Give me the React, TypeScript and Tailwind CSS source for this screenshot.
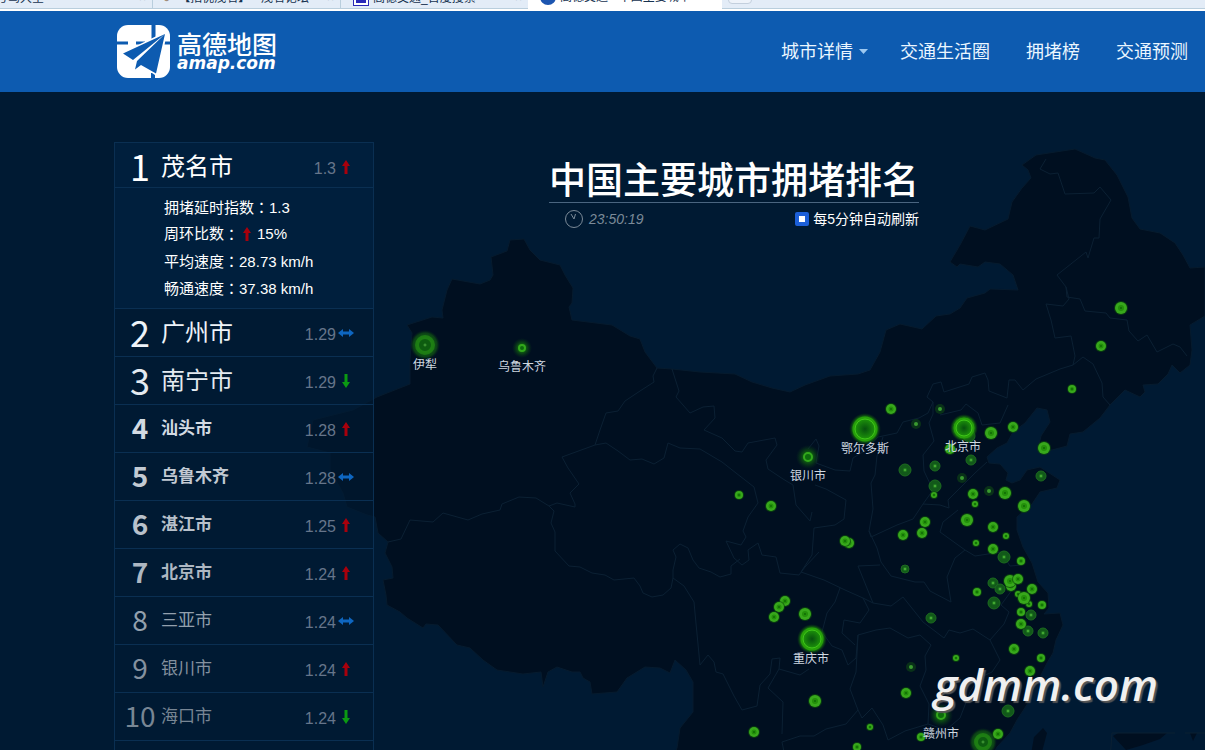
import { useState } from "react";

type Trend = "up" | "down" | "flat";
type DotKind = "solid" | "dim" | "spark" | "halo" | "big" | "haze";

interface City {
  rank: number;
  name: string;
  index: string;
  trend: Trend;
  rankClass: string;
  nameClass: string;
}

const cities: City[] = [
  { rank: 1, name: "茂名市", index: "1.3", trend: "up", rankClass: "text-4xl text-white", nameClass: "text-2xl text-white" },
  { rank: 2, name: "广州市", index: "1.29", trend: "flat", rankClass: "text-4xl text-[#eef3f8]", nameClass: "text-2xl text-[#eef3f8]" },
  { rank: 3, name: "南宁市", index: "1.29", trend: "down", rankClass: "text-4xl text-[#e4eaf0]", nameClass: "text-2xl text-[#e4eaf0]" },
  { rank: 4, name: "汕头市", index: "1.28", trend: "up", rankClass: "text-[28px] font-bold text-[#d3dae2]", nameClass: "text-[17px] font-bold text-[#d3dae2]" },
  { rank: 5, name: "乌鲁木齐", index: "1.28", trend: "flat", rankClass: "text-[28px] font-bold text-[#c2cad3]", nameClass: "text-[17px] font-bold text-[#c2cad3]" },
  { rank: 6, name: "湛江市", index: "1.25", trend: "up", rankClass: "text-[28px] font-bold text-[#b8c1cb]", nameClass: "text-[17px] font-bold text-[#b8c1cb]" },
  { rank: 7, name: "北京市", index: "1.24", trend: "up", rankClass: "text-[28px] font-bold text-[#adb7c2]", nameClass: "text-[17px] font-bold text-[#adb7c2]" },
  { rank: 8, name: "三亚市", index: "1.24", trend: "flat", rankClass: "text-[28px] text-[#93a0ad]", nameClass: "text-[17px] text-[#93a0ad]" },
  { rank: 9, name: "银川市", index: "1.24", trend: "up", rankClass: "text-[28px] text-[#84919f]", nameClass: "text-[17px] text-[#84919f]" },
  { rank: 10, name: "海口市", index: "1.24", trend: "down", rankClass: "text-[28px] text-[#788694]", nameClass: "text-[17px] text-[#788694]" },
];

const LAND =
  "M313 420 353 410 377 397 410 384 410 360 412 333 407 325 432 317 443 318 442 310 447 290 452 279 480 284 490 280 493 275 491 257 507 251 510 240 524 239 530 250 540 260 560 265 565 275 573 288 572 303 569 307 572 320 612 325 630 336 640 339 645 352 657 368 672 369 700 372 735 374 752 382 772 388 790 392 805 385 830 376 858 374 870 370 880 352 886 330 900 324 922 329 936 316 950 314 960 308 967 298 985 293 990 289 1018 290 1013 275 1000 264 985 262 978 267 960 264 957 267 950 262 960 245 970 226 985 230 1008 219 1012 202 1022 188 1031 178 1028 170 1022 165 1036 155 1075 149 1095 158 1105 160 1117 175 1128 197 1132 218 1140 229 1160 233 1175 243 1183 255 1190 268 1205 267 1205 316 1190 325 1192 350 1190 365 1180 373 1172 365 1168 374 1158 384 1143 385 1145 392 1140 397 1125 390 1110 405 1100 418 1083 432 1070 434 1067 446 1052 450 1038 449 1041 436 1050 422 1047 410 1037 408 1025 423 1013 432 1007 443 997 448 987 457 989 463 1000 464 1008 473 1006 480 1012 483 1020 480 1027 470 1040 467 1060 480 1057 488 1040 492 1032 504 1017 517 1017 530 1023 547 1032 563 1038 582 1048 593 1049 608 1044 614 1060 613 1063 625 1056 640 1053 653 1047 663 1040 677 1030 700 1017 720 1010 733 997 747 990 760 672 760 677 748 680 728 693 712 693 682 686 670 675 660 670 673 660 668 645 667 627 678 617 692 592 694 590 682 583 678 580 672 572 672 557 667 548 672 543 687 541 672 523 674 497 670 483 660 470 648 457 645 438 625 426 624 423 628 407 618 400 612 387 605 386 595 383 580 393 578 392 567 385 553 388 542 378 533 375 517 367 515 347 507 343 493 330 470 330 453 307 447Z";

const ISLANDS =
  "M1030 760 1034 737 1043 728 1047 733 1043 748 1040 760Z M1113 736 1118 733 1167 733 1160 739 1143 745 1126 750Z M1190 733 1197 733 1193 741Z";

const borders = [
  // Xinjiang, Qinghai and Tibet
  "M657 368 653 376 654 382 640 391 625 401 618 411 606 413 600 430 595 445 562 457 568 468 579 484 570 493 575 504 575 507 557 503 549 506 536 498 519 497 502 504 500 510 482 514 468 520 443 513 433 522 410 520 401 539 388 542",
  "M549 506 554 511 551 523 555 532 555 551 569 566 580 567 592 573 605 575 614 580 634 578 640 586 643 593 652 597 663 595 671 588 673 578 673 570 676 557 673 550 680 544 688 548 693 560 699 568 711 572 720 577 731 574 731 566 740 559",
  "M595 445 606 443 618 451 630 460 642 459 654 464 664 458 668 443 680 448 700 449 722 462 736 473 754 487 758 503 748 517 743 531 746 537 741 545 726 541 734 558 742 565 749 560 748 550 758 543 762 555 776 557 780 573 799 575 805 567 819 552",
  "M673 578 684 586 694 602 695 613 700 665 708 655 714 662 716 672 723 674 734 696 742 710 757 706 760 685 770 674 772 659 780 658 779 669 800 675 809 669",
  // Gansu and Inner Mongolia
  "M672 369 679 391 676 397 690 413 703 407 714 406 715 418 704 430 722 438 735 451 742 452 748 443 775 438 777 445 766 460 768 469 783 479 793 485 796 505 810 521 812 512",
  "M808 449 816 439 819 446 816 463 835 470 850 471 853 458 866 450 878 437 897 433 903 422 919 418 928 413 933 402 927 397 933 384 941 382 944 392 969 384 972 377 985 373 988 380 989 391 1007 398 1009 380 1015 380 1023 390 1036 379 1060 369 1073 365 1075 356 1071 336 1055 338 1051 320 1046 304 1063 306 1069 299 1066 287 1057 275 1086 252 1088 258 1094 238 1099 238 1100 219 1111 200 1100 187 1094 193 1065 194 1058 173 1050 174 1040 169 1046 159",
  "M1066 287 1067 297 1080 299 1085 311 1106 313 1110 318 1127 320 1129 331 1138 341 1147 335 1157 352 1173 344 1180 347 1187 356",
  "M1073 365 1083 357 1093 364 1102 383 1103 397 1110 405",
  // Hebei, Shanxi and Shandong
  "M933 402 933 414 929 423 934 441 923 455 924 471 933 490 923 504 940 505 949 508 948 500 975 473 987 462",
  "M940 415 961 410 966 404 978 413 982 425 1000 423 1008 405",
  "M883 437 877 456 875 475 871 483 873 509 869 531 871 537 897 525 913 519 923 504",
  "M869 531 877 548 881 562 891 576 915 582 924 582 930 591 951 602 947 577 955 558 965 550 940 532 943 522 958 510",
  "M965 550 975 556 1001 552 1010 566 1022 565",
  // Shaanxi, Sichuan and Hubei
  "M815 485 826 489 846 500 844 519 835 525 814 528 812 555 801 572 824 580 845 590 863 598 873 603 858 566 880 565",
  "M840 588 835 602 827 613 822 632 832 646 842 650 848 665 856 658 858 635 876 630 890 628 908 638 920 635 931 645 925 656 926 670 920 686 929 704 928 724",
  "M863 598 869 610 860 623 844 620 842 633 855 645",
  "M873 603 891 606 903 597 923 622 944 638 949 630 960 633 973 629 990 640 1004 624 1009 612 1001 605 1012 590",
  "M858 635 856 672 850 689 858 710 846 724 826 729 814 736 800 736 782 742 785 757",
  "M779 669 768 688 783 702 782 734",
  "M928 724 905 731 888 740 883 725 872 708 862 718 858 710",
  "M990 640 1000 660 992 672 979 678 970 692 960 718 946 730 928 724",
  "M1175 733 1112 733 1110 760 M1185 733 1205 733",
];

const dots: [number, number, number, DotKind][] = [
  [1121, 308, 6, "solid"], [1101, 346, 5, "solid"], [1072, 389, 4, "solid"],
  [891, 409, 5, "solid"], [940, 409, 3, "spark"], [916, 424, 3, "spark"],
  [991, 433, 6, "solid"], [1013, 427, 5, "solid"], [1044, 448, 6, "solid"],
  [950, 449, 5, "solid"], [969, 436, 6, "dim"], [964, 428, 11, "big"],
  [865, 429, 13, "big"], [812, 639, 12, "big"], [425, 345, 13, "haze"],
  [522, 348, 5, "halo"], [808, 457, 6, "halo"], [941, 715, 6, "halo"],
  [905, 470, 6, "dim"], [935, 466, 5, "dim"], [935, 486, 6, "dim"], [934, 495, 3, "solid"],
  [971, 460, 5, "dim"], [962, 478, 3, "spark"], [1041, 476, 5, "dim"],
  [973, 494, 5, "solid"], [989, 491, 3, "spark"], [975, 504, 3, "solid"],
  [1005, 493, 6, "solid"], [1024, 506, 6, "solid"], [967, 520, 6, "solid"],
  [993, 527, 5, "solid"], [1006, 536, 3, "solid"], [976, 543, 3, "solid"],
  [993, 549, 5, "solid"], [1004, 557, 6, "dim"], [1021, 561, 4, "solid"],
  [739, 495, 4, "solid"], [771, 506, 5, "solid"], [925, 522, 5, "solid"],
  [903, 535, 5, "solid"], [922, 533, 5, "solid"], [849, 543, 5, "solid"], [845, 541, 5, "solid"],
  [905, 569, 4, "dim"], [785, 601, 5, "solid"], [779, 607, 5, "solid"],
  [774, 617, 5, "solid"], [805, 614, 6, "solid"], [931, 618, 5, "dim"],
  [993, 583, 5, "dim"], [1000, 589, 5, "dim"], [977, 592, 4, "solid"],
  [1011, 586, 5, "solid"], [1010, 581, 6, "solid"], [1018, 579, 5, "solid"],
  [994, 603, 6, "dim"], [1032, 589, 5, "solid"], [1018, 594, 3, "solid"],
  [1029, 604, 3, "solid"], [1024, 598, 6, "solid"], [1042, 605, 4, "solid"],
  [1021, 612, 4, "solid"], [1031, 615, 5, "dim"], [1028, 631, 5, "dim"],
  [1021, 624, 5, "solid"], [1043, 633, 5, "dim"], [1014, 649, 5, "solid"],
  [1041, 658, 4, "solid"], [956, 658, 3, "solid"], [1030, 671, 5, "solid"],
  [911, 667, 3, "spark"], [906, 693, 5, "solid"], [815, 701, 6, "solid"],
  [754, 732, 5, "solid"], [870, 727, 3, "solid"], [857, 747, 4, "solid"],
  [921, 737, 4, "solid"], [1008, 711, 6, "dim"], [983, 742, 12, "haze"], [998, 734, 5, "solid"],
];

const labels: [number, number, string][] = [
  [425, 369, "伊犁"],
  [522, 371, "乌鲁木齐"],
  [865, 453, "鄂尔多斯"],
  [963, 451, "北京市"],
  [808, 480, "银川市"],
  [811, 663, "重庆市"],
  [941, 738, "赣州市"],
];

function TrendIcon({ trend }: { trend: Trend }) {
  if (trend === "flat") {
    return (
      <svg viewBox="0 0 16 8" className="w-4 h-2" role="img" aria-label="持平">
        <path d="M0 4 5 0V2.500H11V0L16 4 11 8V5.500H5V8Z" fill="#0e66c0" />
      </svg>
    );
  }
  return (
    <svg
      viewBox="0 0 8 14"
      className={`w-2 h-3.5 ${trend === "down" ? "rotate-180" : ""}`}
      role="img"
      aria-label={trend === "up" ? "上升" : "下降"}
    >
      <path d="M4 0 8 6H5.500V14H2.500V6H0Z" fill={trend === "up" ? "#a8000c" : "#0b9a12"} />
    </svg>
  );
}

function Dot({ x, y, r, kind }: { x: number; y: number; r: number; kind: DotKind }) {
  switch (kind) {
    case "big":
      return (
        <g>
          <circle cx={x} cy={y} r={r + 3} fill="url(#glow)" />
          <circle cx={x} cy={y} r={r - 2} fill="url(#core)" stroke="#27a00a" strokeWidth="3" />
          <circle cx={x} cy={y} r={r - 3} fill="none" stroke="#3fc41a" />
        </g>
      );
    case "haze":
      return (
        <g>
          <circle cx={x} cy={y} r={r + 2} fill="url(#glow)" opacity="0.6" />
          <circle cx={x} cy={y} r={r - 5} fill="#0b5a10" stroke="#238a14" strokeWidth="4" opacity="0.7" />
          <circle cx={x} cy={y} r="1" fill="none" stroke="#49a23c" />
        </g>
      );
    case "halo":
      return (
        <g>
          <circle cx={x} cy={y} r={r * 2} fill="url(#halo)" />
          <circle cx={x} cy={y} r={r - 2} fill="#0c6a0c" stroke="#33a81c" strokeWidth="2" />
        </g>
      );
    case "dim":
      return (
        <g>
          <circle cx={x} cy={y} r={r} fill="#12591a" stroke="#1d6b20" strokeWidth="1" />
          <circle cx={x} cy={y} r="2" fill="#227d1e" />
          <circle cx={x} cy={y} r="1" fill="#4fb53c" />
        </g>
      );
    case "spark":
      return (
        <g>
          <circle cx={x} cy={y} r={r + 2} fill="#0b3a18" opacity="0.8" />
          <circle cx={x} cy={y} r={r - 1} fill="#3a9a30" />
        </g>
      );
    default:
      return (
        <g>
          <circle cx={x} cy={y} r={r + 1} fill="#0b4d0c" opacity="0.7" />
          <circle cx={x} cy={y} r={r} fill="#38a81c" />
          <circle cx={x} cy={y} r={r / 2} fill="#23900a" />
          <circle cx={x} cy={y} r="1" fill="#0f6a06" />
        </g>
      );
  }
}

function TrafficMap() {
  return (
    <svg
      viewBox="0 92 1205 658"
      width="1205"
      height="658"
      className="absolute left-0 top-0 max-w-none overflow-visible"
      aria-hidden="true"
    >
      <defs>
        <radialGradient id="glow">
          <stop offset="0.5" stopColor="#1f9a0a" />
          <stop offset="0.8" stopColor="#17750c" stopOpacity="0.8" />
          <stop offset="1" stopColor="#0a3a10" stopOpacity="0" />
        </radialGradient>
        <radialGradient id="halo">
          <stop offset="0.3" stopColor="#12700c" />
          <stop offset="1" stopColor="#0a3a18" stopOpacity="0" />
        </radialGradient>
        <radialGradient id="core">
          <stop offset="0" stopColor="#06500e" />
          <stop offset="1" stopColor="#1f9a0a" />
        </radialGradient>
      </defs>
      <path d={LAND} fill="#000f20" stroke="#061b2e" />
      <path d={ISLANDS} fill="#000f20" />
      <g fill="none" stroke="#0b2033" strokeLinejoin="round">
        {borders.map((d) => (
          <path key={d} d={d} />
        ))}
      </g>
      {dots.map(([x, y, r, kind]) => (
        <Dot key={`${x}-${y}`} x={x} y={y} r={r} kind={kind} />
      ))}
      <g className="font-['Noto_Sans_CJK_SC',sans-serif] text-xs" fill="#cfd8e0" textAnchor="middle">
        {labels.map(([x, y, text]) => (
          <text key={text} x={x} y={y}>
            {text}
          </text>
        ))}
      </g>
    </svg>
  );
}

function BrowserTabs() {
  return (
    <div className="h-[11px] shrink-0 overflow-hidden flex items-start bg-white">
      <div className="flex flex-1 items-end h-[9px] bg-[#e3ecf7] border-b border-[#b9cedd] text-[12px] leading-4 text-[#16324f] whitespace-nowrap">
        <div className="flex justify-between w-[152px] pr-1.5 pb-0.5">
          <span className="-ml-1">考驾大全</span>
          <span className="text-[#9aa9b8]">×</span>
        </div>
        <div className="flex w-[188px] pl-2.5 pr-1.5 pb-0.5 border-l border-[#b9cedd]">
          <span className="mr-2 text-[#a08c7a]">●</span>
          <span className="flex-1">【招优茂名】 - 茂名论坛</span>
          <span className="text-[#9aa9b8]">×</span>
        </div>
        <div className="flex w-[188px] pl-3 pr-1.5 pb-0.5 border-l border-[#b9cedd]">
          <span className="w-4 h-4 mr-1 bg-white border border-[#2a2ab8] p-0.5">
            <span className="block w-full h-full bg-[#2a2ab8]" />
          </span>
          <span className="flex-1">高德交通_百度搜索</span>
          <span className="text-[#9aa9b8]">×</span>
        </div>
        <div className="flex w-[194px] pl-3 pr-3 pb-1 bg-white -mb-px">
          <span className="w-4 h-4 mr-1 rounded-full bg-[#1c55b0]" />
          <span className="flex-1 overflow-hidden">高德交通 - 中国主要城市</span>
          <span className="text-[#9aa9b8]">×</span>
        </div>
        <div className="ml-1.5 mb-1 w-6 h-4 rounded-sm border border-[#c3cfdd] bg-[#eef3fa]" />
      </div>
    </div>
  );
}

function Logo() {
  return (
    <a href="#home" className="flex items-center gap-[7px] text-white">
      <svg viewBox="0 0 53 53" className="w-[53px] h-[53px]" aria-hidden="true">
        <rect width="53" height="53" rx="11" fill="#fff" />
        <path d="M34.500 0H38.500V17H34.500ZM0 16.500H11V19.500H0ZM19 16.500H28V19.500H19ZM47 16.500H53V19.500H46ZM34 48H38V53H34Z" fill="#0d5bb0" />
        <path d="M50 6 4.500 28 18 37 17 47 26 42 41 52 44 40Z" fill="#fff" />
        <path d="M48 9 6 28.500 16 35ZM48 9 20 36 18 44.500 24 40ZM48 9 24 40 39 48.500Z" fill="#0d5bb0" />
      </svg>
      <span className="flex flex-col pt-0.5">
        <span className="text-[25px] leading-5 font-medium">高德地图</span>
        <span className="font-['DejaVu_Sans',sans-serif] text-[17px] leading-4 font-bold italic">amap.com</span>
      </span>
    </a>
  );
}

function Header() {
  return (
    <header className="flex shrink-0 items-center justify-between h-[81px] pl-[117px] pr-[17px] bg-[#0d5bb0]">
      <Logo />
      <nav className="flex items-center gap-9 text-lg text-[#eaf6ff] whitespace-nowrap">
        <button type="button" className="flex items-center gap-1.5 -mr-1">
          城市详情
          <svg viewBox="0 0 9 5" className="w-[9px] h-[5px]" aria-hidden="true">
            <path d="M0 0H9L4.500 5Z" fill="#9cc8f0" />
          </svg>
        </button>
        <a href="#life">交通生活圈</a>
        <a href="#rank">拥堵榜</a>
        <a href="#forecast">交通预测</a>
      </nav>
    </header>
  );
}

// the traditional face centres the full-width colon in its box
function Colon() {
  return <span className="font-['Noto_Sans_CJK_TC',sans-serif]">：</span>;
}

function CityDetail() {
  return (
    <div className="pl-[49px] pt-[5px] pb-[7px] text-[15px] leading-[27px] text-white bg-[#001f3d] border-b border-[#0a2f52]">
      <p className="h-[27px]">
        拥堵延时指数
        <Colon />
        1.3
      </p>
      <p className="flex items-center h-[27px]">
        周环比数
        <Colon />
        <span className="mx-1">
          <TrendIcon trend="up" />
        </span>
        <span className="ml-0.5">15%</span>
      </p>
      <p className="h-[27px]">
        平均速度
        <Colon />
        28.73 km/h
      </p>
      <p className="h-[27px]">
        畅通速度
        <Colon />
        37.38 km/h
      </p>
    </div>
  );
}

function RankList() {
  const [open, setOpen] = useState(1);

  return (
    <ol className="w-[260px] shrink-0 border border-[#0a2f52] bg-[#001a33]/60">
      {cities.map((c) => (
        <li key={c.rank}>
          <button
            type="button"
            onClick={() => setOpen(c.rank)}
            className={`flex w-full items-center border-b border-[#0a2f52] text-left ${
              c.rank === 1 ? "h-[45px] pt-1 bg-[#001f3d]" : "h-12"
            }`}
          >
            <span className={`w-[46px] pl-1 pb-1 shrink-0 text-center leading-none font-['Noto_Sans_CJK_SC',sans-serif] ${c.rankClass}`}>
              {c.rank}
            </span>
            <span className={`flex-1 leading-8 ${c.nameClass}`}>{c.name}</span>
            <span className="pt-1 font-['Liberation_Sans',sans-serif] text-base leading-none text-[#66758a]">{c.index}</span>
            <span className="flex w-5 mr-[17px] justify-center">
              <TrendIcon trend={c.trend} />
            </span>
          </button>
          {c.rank === 1 && open > 0 && <CityDetail />}
        </li>
      ))}
      <li className="h-12" />
    </ol>
  );
}

function MapTitle() {
  const [auto, setAuto] = useState(true);

  return (
    <div className="ml-[175px] mt-5 w-[370px] shrink-0 self-start">
      <h1 className="text-[37px] leading-10 font-medium text-white whitespace-nowrap border-b border-[#4a6580]">
        中国主要城市拥堵排名
      </h1>
      <div className="flex items-center justify-between pl-4 pt-1.5">
        <div className="flex items-center gap-1.5">
          <svg viewBox="0 0 18 18" className="w-[18px] h-[18px]" fill="none" stroke="#7b8a98" aria-hidden="true">
            <circle cx="9" cy="9" r="8.500" />
            <path d="M6 4 9 9 10.500 4" />
          </svg>
          <time className="font-['Liberation_Sans',sans-serif] text-sm italic text-[#7b8a98]">23:50:19</time>
        </div>
        <label className="flex items-center gap-1 text-sm text-white">
          <input
            type="checkbox"
            checked={auto}
            onChange={(e) => setAuto(e.target.checked)}
            className="w-3.5 h-3.5 appearance-none rounded-xs border-4 border-[#1c5fd8] bg-[#1c5fd8] checked:bg-white"
          />
          每5分钟自动刷新
        </label>
      </div>
    </div>
  );
}

export default function App() {
  return (
    <div className="flex flex-col h-screen overflow-hidden bg-[#001a33] font-['Liberation_Sans','Noto_Sans_CJK_SC',sans-serif]">
      <BrowserTabs />
      <Header />
      <main className="relative flex-1 overflow-hidden">
        <TrafficMap />
        <div className="relative flex items-start pl-[114px] pt-[50px]">
          <RankList />
          <MapTitle />
        </div>
        <span className="absolute left-[934px] top-[562px] font-['Open_Sans',sans-serif] text-[44px] leading-[60px] font-semibold italic text-[#f0f0f0] [text-shadow:2px_2px_1px_#555]">
          gdmm.com
        </span>
      </main>
    </div>
  );
}
